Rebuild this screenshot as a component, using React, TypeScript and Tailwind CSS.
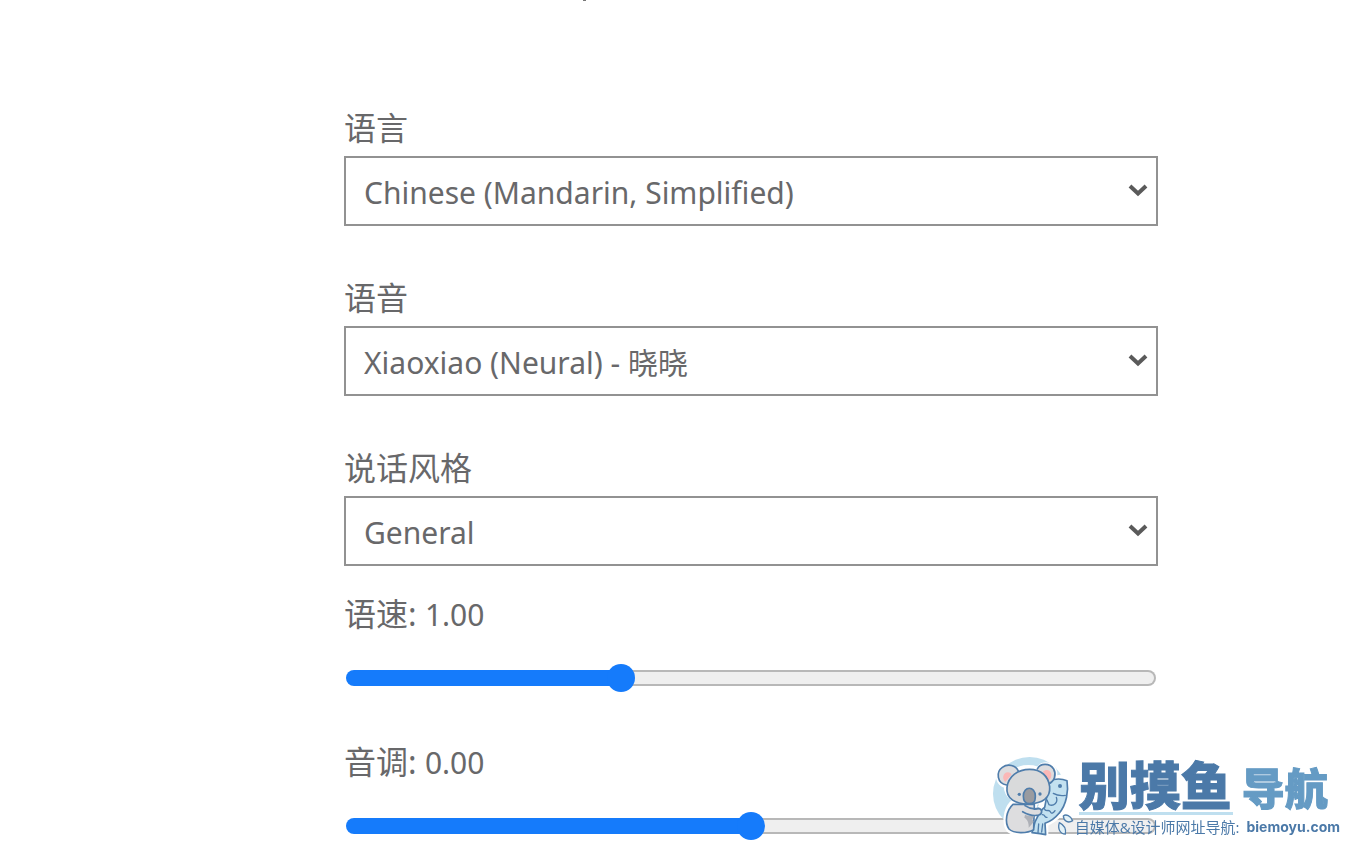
import { useState } from "react";

const LANGUAGES = ["Chinese (Mandarin, Simplified)", "English (United States)", "Japanese (Japan)"];
const VOICES = ["Xiaoxiao (Neural) - 晓晓", "Yunyang (Neural) - 云扬", "Xiaochen (Neural) - 晓辰"];
const STYLES = ["General", "Assistant", "Newscast"];

function SelectField({ id, label, options }: { id: string; label: string; options: string[] }) {
  return (
    <div className="flex flex-col gap-1">
      <label htmlFor={id} className="text-[32px] leading-12">
        {label}
      </label>
      <div className="relative">
        <select
          id={id}
          className="h-[70px] w-full appearance-none border-2 border-[#929292] bg-white pt-0.5 pr-12 pl-[18px] text-[30px] outline-none"
        >
          {options.map((o) => (
            <option key={o}>{o}</option>
          ))}
        </select>
        <svg
          viewBox="0 0 20 14"
          className="pointer-events-none absolute top-7 right-2.5 h-3.5 w-5"
          fill="none"
          stroke="#5a5a5a"
          strokeWidth="4"
        >
          <path d="M2 2 10 9.5 18 2" />
        </svg>
      </div>
    </div>
  );
}

type RangeProps = { id: string; label: string; min: number; max: number; initial: number };

function RangeField({ id, label, min, max, initial }: RangeProps) {
  const [value, setValue] = useState(initial);
  const fill = ((value - min) / (max - min)) * 100;

  return (
    <div className="flex flex-col gap-7">
      <label htmlFor={id} className="text-[32px] leading-12">
        {label}: <span className="text-[30px] leading-none">{value.toFixed(2)}</span>
      </label>
      <div className="flex px-0.5">
        <input
          id={id}
          type="range"
          min={min}
          max={max}
          step={0.01}
          value={value}
          onChange={(e) => setValue(Number(e.target.value))}
          style={{ "--fill": `${fill}%` } as React.CSSProperties}
          className="h-6 w-full appearance-none bg-transparent outline-none [&::-webkit-slider-runnable-track]:h-4 [&::-webkit-slider-runnable-track]:rounded-full [&::-webkit-slider-runnable-track]:border-2 [&::-webkit-slider-runnable-track]:border-transparent [&::-webkit-slider-runnable-track]:[background:linear-gradient(#157bfb,#157bfb)_0_0/var(--fill)_100%_no-repeat_border-box,linear-gradient(#efefef,#efefef)_padding-box,linear-gradient(#b8b8b8,#b8b8b8)_border-box] [&::-webkit-slider-thumb]:-mt-2 [&::-webkit-slider-thumb]:size-7 [&::-webkit-slider-thumb]:appearance-none [&::-webkit-slider-thumb]:rounded-full [&::-webkit-slider-thumb]:bg-[#157bfb]"
        />
      </div>
    </div>
  );
}

function Koala() {
  return (
    <svg
      viewBox="0 0 270 276"
      className="h-[92px] w-[90px] shrink-0"
      stroke="#4f7dab"
      strokeWidth="5"
      strokeLinecap="round"
      strokeLinejoin="round"
    >
      <circle cx="134" cy="131" r="110" fill="#bfdfef" stroke="none" />

      {/* white outline behind the body */}
      <g fill="#fff" stroke="#fff" strokeWidth="20">
        <circle cx="67" cy="80" r="24" />
        <circle cx="183" cy="71" r="24" />
        <ellipse cx="130" cy="107" rx="64" ry="52" />
        <path d="M82 162c-18 20-22 58-9 76 18 14 55 12 75 3l-2-76z" />
        <path d="M204 92c16-12 34-8 43-2 6 32 1 74-24 100-12 14-25 23-43 30v34l-35-6 6-34z" />
      </g>

      {/* fish */}
      <path
        d="M194 94c16-10 38-8 52-2 5 30-1 72-24 98-12 15-24 24-42 30l2 34-17-3-24-3 9-32c10-20 16-36 29-44z"
        fill="#c3e1f0"
      />
      <circle cx="225" cy="108" r="6" fill="#4f7dab" stroke="none" />
      <path
        d="M205 130c10 6 22 8 36 6M214 142c6 16-8 28-22 22l-6-14M178 176c4 12 14 0 18 9s11 2 14-3M172 194c10 0 6 10 14 8M161 222l-2 26M173 222l-3 24"
        fill="none"
        strokeWidth="4"
      />

      {/* body */}
      <path d="M84 163c-20 18-26 54-12 74 14 14 54 14 74 2l2-76z" fill="#dddddf" />
      <path d="M120 194c8 4 22 4 30 0l-8 14 4 8-15 17c1-16-5-26-13-30z" fill="#aeb1b8" stroke="none" />
      <path d="M113 185c18 10 34 14 48 10 12-4 12-18-1-20-16 4-27 1-40-8" fill="#dddddf" />
      <path d="M148 178l14-3" fill="none" strokeWidth="4" />

      {/* ears */}
      <path d="M65 105C36 101 32 66 52 52c17-12 40-6 48 11" fill="#dddddf" />
      <path d="M157 57c8-18 37-19 49 0 9 17 3 37-16 45" fill="#dddddf" />
      <path d="M61 96c-12-10-6-29 7-29 7 0 11 4 11 7z" fill="#fbb7b6" stroke="none" />
      <path d="M174 65c7-8 20-7 24 4 3 10-1 20-9 22z" fill="#fbb7b6" stroke="none" />

      {/* head */}
      <path
        d="M66 112c4-34 33-54 68-54 34 0 56 20 60 52 3 34-22 50-62 52-39 1-70-15-66-50z"
        fill="#d9dadb"
      />
      <path d="M115 138c0-31 36-31 36 0 0 20-7 23-18 23s-18-5-18-23z" fill="#999ba0" />
      <circle cx="103" cy="133" r="5" fill="#4f7dab" stroke="none" />
      <circle cx="165" cy="132" r="5" fill="#4f7dab" stroke="none" />

      {/* splashes */}
      <path d="M235 198c8-7 22 0 28 14-13 9-27 2-28-14z" fill="#e3f2f8" strokeWidth="4" />
      <path d="M223 218c14 7 21 20 18 34-15 0-24-15-18-34z" fill="#e3f2f8" strokeWidth="4" />
    </svg>
  );
}

function SiteBadge() {
  return (
    <a
      href="#biemoyu"
      className="fixed right-3 bottom-0 flex items-start font-['Open_Sans','Noto_Sans_CJK_SC',sans-serif] text-[#4b79a8]"
    >
      <Koala />
      <div className="flex flex-col pt-2">
        <div className="flex h-[54px] items-baseline pl-1 leading-[54px] font-black [-webkit-text-stroke:1px]">
          <span className="w-[163px] text-[51px]">别摸鱼</span>
          <span className="text-[43px] text-[#659bc4]">导航</span>
        </div>
        <div className="ml-1 h-[3px] w-[154px] bg-[#bfdfef]" />
        <div className="flex items-center gap-[7px] leading-6 whitespace-nowrap">
          <span className="text-[15px]">自媒体&amp;设计师网址导航:</span>
          <span className="font-['Inter'] text-[14px] font-bold">biemoyu.com</span>
        </div>
      </div>
    </a>
  );
}

export default function App() {
  return (
    <main className="min-h-screen bg-white pr-[194px] pl-86 font-['Noto_Sans','Noto_Sans_CJK_SC',sans-serif] text-[#68686a]">
      <div className="h-26 pl-[239px]">
        <div className="h-px w-[3px] bg-[#777]" />
      </div>
      <form className="flex flex-col gap-12">
        <SelectField id="language" label="语言" options={LANGUAGES} />
        <SelectField id="voice" label="语音" options={VOICES} />
        <div className="flex flex-col gap-6">
          <SelectField id="style" label="说话风格" options={STYLES} />
          <RangeField id="speed" label="语速" min={0} max={3} initial={1} />
        </div>
        <RangeField id="pitch" label="音调" min={-50} max={50} initial={0} />
      </form>
      <SiteBadge />
    </main>
  );
}
